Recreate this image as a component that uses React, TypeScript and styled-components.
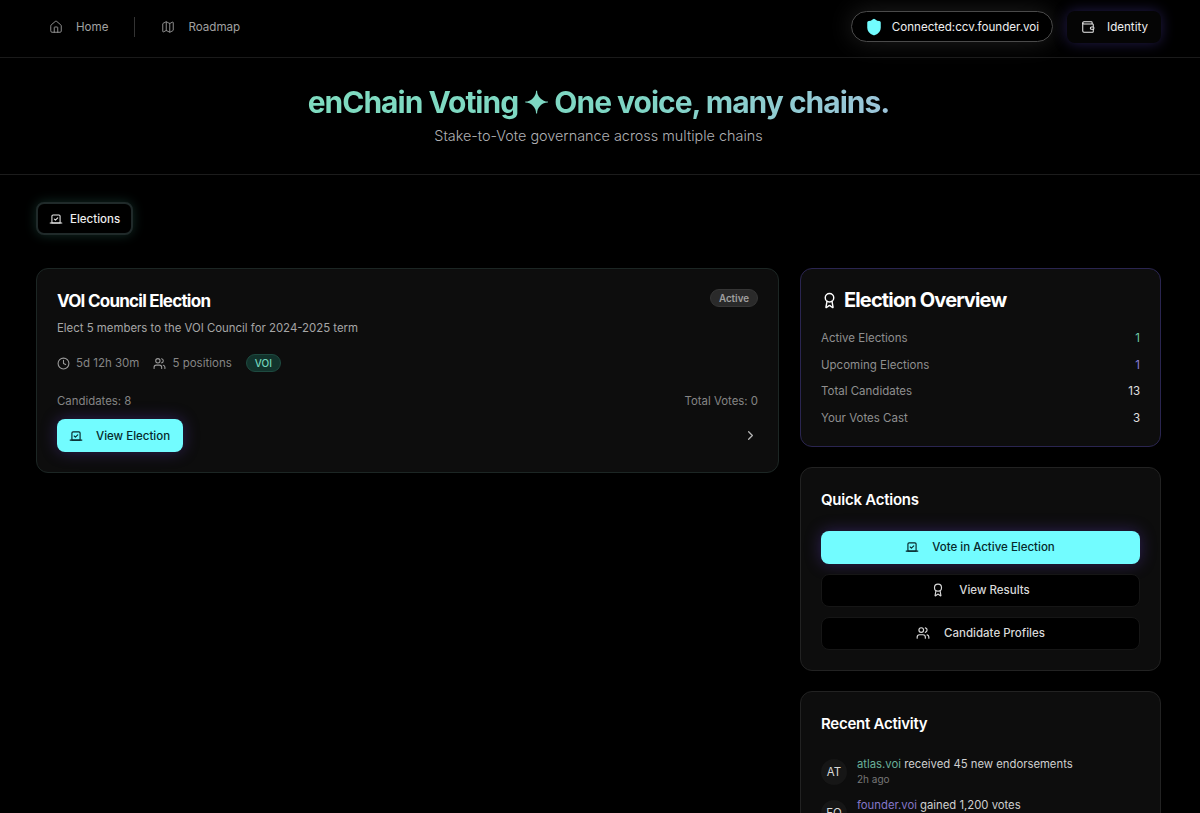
import { Award, ChevronRight, Clock, House, Map, Shield, Users, Vote, Wallet } from "lucide-react";
import styled, { createGlobalStyle } from "styled-components";

const GlobalStyle = createGlobalStyle`
  * { box-sizing: border-box; }
  html, body { margin: 0; background: #000; }
  body { font-family: Inter, "Liberation Sans", sans-serif; color: #fff; -webkit-font-smoothing: antialiased; }
`;

const Page = styled.div`
  min-height: 813px;
  background: #000;
`;

const TopBar = styled.header`
  height: 58px;
  padding: 0 39px 4px 36px;
  display: flex;
  align-items: center;
  justify-content: space-between;
  border-bottom: 1px solid #1a1a1a;
`;

const NavGroup = styled.nav`
  display: flex;
  align-items: center;
`;

const NavLink = styled.a`
  display: flex;
  align-items: center;
  gap: 13px;
  padding: 0 13px;
  font-size: 11.6px;
  font-weight: 400;
  color: #a0a0a0;
  svg { width: 14px; height: 14px; }
`;

const NavDivider = styled.div`
  width: 1px;
  height: 20px;
  margin: 0 13px;
  background: #333;
`;

const Wallets = styled.div`
  display: flex;
  align-items: center;
  gap: 14px;
`;

const ConnectedPill = styled.div`
  height: 31px;
  padding: 0 13px;
  display: flex;
  align-items: center;
  gap: 9px;
  border-radius: 16px;
  background: #000;
  border: 1px solid #4a4a4a;
  box-shadow: 0 0 24px rgba(255, 255, 255, 0.12);
  font-size: 11.6px;
  font-weight: 400;
  color: #eee;
  svg { width: 18px; height: 18px; color: #72fcff; fill: #72fcff; }
`;

const IdentityButton = styled.button`
  height: 32px;
  padding: 0 13px 0 14px;
  display: flex;
  align-items: center;
  gap: 12px;
  border: 0;
  border-radius: 8px;
  background: #050505;
  box-shadow: 0 0 14px rgba(88, 70, 190, 0.4);
  font: 400 11.6px Inter, sans-serif;
  color: #eee;
  svg { width: 14px; height: 14px; }
`;

const Hero = styled.section`
  height: 117px;
  padding: 25px 3px 0 0;
  text-align: center;
  border-bottom: 1px solid #1c1c1c;
`;

const HeroTitle = styled.h1`
  margin: 0 auto;
  width: fit-content;
  font-size: 30px;
  line-height: 38px;
  font-weight: 700;
  letter-spacing: -1px;
  background: linear-gradient(100deg, #7fdcc0 0%, #7ed6c4 55%, #9cc4da 100%);
  -webkit-background-clip: text;
  background-clip: text;
  color: transparent;
`;

const HeroSub = styled.p`
  margin: 5px 0 0;
  font-size: 14.4px;
  line-height: 20px;
  font-weight: 300;
  color: #b0b0b4;
`;

const Content = styled.main`
  padding: 27px 39px 40px 36px;
`;

const TabButton = styled.button`
  height: 33px;
  padding: 0 11px;
  display: flex;
  align-items: center;
  gap: 7px;
  border: 2px solid #202a2a;
  border-radius: 8px;
  background: #000;
  box-shadow: 0 0 12px rgba(90, 220, 190, 0.2);
  font: 500 11.5px Inter, sans-serif;
  color: #eee;
  svg { width: 14px; height: 14px; }
`;

const Columns = styled.div`
  margin-top: 33px;
  display: grid;
  grid-template-columns: 743px 361px;
  gap: 21px;
  align-items: start;
`;

const Card = styled.section<{ $tone?: "teal" | "violet" }>`
  padding: 20px;
  background: #0d0d0d;
  border-radius: 12px;
  border: 1px solid ${(p) => (p.$tone === "teal" ? "#1c2624" : p.$tone === "violet" ? "#2a2550" : "#222")};
`;

const ElectionHead = styled.div`
  display: flex;
  align-items: flex-start;
  justify-content: space-between;
`;

const ElectionTitle = styled.h2`
  margin: 0;
  font-size: 17px;
  line-height: 25px;
  font-weight: 700;
  letter-spacing: -0.75px;
`;

const ElectionDesc = styled.p`
  margin: 6px 0 0;
  font-size: 11.4px;
  line-height: 16px;
  color: #a6a6a6;
`;

const StatusBadge = styled.span`
  height: 18px;
  padding: 0 8px;
  display: flex;
  align-items: center;
  border-radius: 9px;
  background: #2a2a2a;
  border: 1px solid #353535;
  font-size: 9.8px;
  font-weight: 600;
  color: #a0a0a0;
`;

const MetaRow = styled.div`
  margin-top: 18px;
  display: flex;
  align-items: center;
  gap: 14px;
`;

const MetaItem = styled.span`
  display: flex;
  align-items: center;
  gap: 6px;
  font-size: 11.5px;
  color: #858585;
  svg { width: 13px; height: 13px; color: #9a9a9a; }
`;

const ChainBadge = styled.span`
  height: 18px;
  padding: 0 8px;
  display: flex;
  align-items: center;
  border-radius: 9px;
  background: #12332c;
  border: 1px solid #1e4a40;
  font-size: 10px;
  font-weight: 500;
  color: #72d6bc;
`;

const CountRow = styled.div`
  margin-top: 21px;
  display: flex;
  justify-content: space-between;
  font-size: 11.4px;
  line-height: 16px;
  color: #858585;
`;

const ActionRow = styled.div`
  margin-top: 10px;
  display: flex;
  align-items: center;
  justify-content: space-between;
  svg.chevron { width: 15px; height: 15px; color: #b5b5b5; }
`;

const PrimaryButton = styled.button<{ $wide?: boolean }>`
  height: 33px;
  padding: 0 13px 0 12px;
  display: flex;
  align-items: center;
  justify-content: center;
  gap: 13px;
  width: ${(p) => (p.$wide ? "100%" : "auto")};
  border: 0;
  border-radius: 8px;
  background: #72fcff;
  box-shadow: 0 0 16px rgba(110, 70, 220, 0.35);
  font: 500 11.5px Inter, sans-serif;
  color: #06292c;
  svg { width: 14px; height: 14px; }
`;

const SideColumn = styled.aside`
  display: flex;
  flex-direction: column;
  gap: 20px;
`;

const OverviewTitle = styled.h2`
  margin: 0;
  display: flex;
  align-items: center;
  gap: 6px;
  font-size: 20px;
  line-height: 22px;
  font-weight: 700;
  letter-spacing: -0.85px;
  svg { width: 17px; height: 17px; }
`;

const StatList = styled.dl`
  margin: 19px 0 -1px;
  display: flex;
  flex-direction: column;
  gap: 10px;
`;

const StatRow = styled.div`
  display: flex;
  justify-content: space-between;
  font-size: 11.5px;
  line-height: 16.7px;
  dt { color: #8f8f8f; }
`;

const StatValue = styled.dd<{ $color: string }>`
  margin: 0;
  color: ${(p) => p.$color};
`;

const PanelTitle = styled.h3`
  margin: 2px 0 0;
  font-size: 15px;
  line-height: 20px;
  font-weight: 600;
  letter-spacing: -0.25px;
`;

const ActionStack = styled.div`
  margin-top: 21px;
  display: flex;
  flex-direction: column;
  gap: 10px;
`;

const GhostButton = styled.button`
  height: 33px;
  display: flex;
  align-items: center;
  justify-content: center;
  gap: 14px;
  border: 1px solid #161616;
  border-radius: 8px;
  background: #000;
  font: 500 11.5px Inter, sans-serif;
  color: #d8d8d8;
  svg { width: 14px; height: 14px; }
`;

const ActivityList = styled.div`
  margin-top: 23px;
  display: flex;
  flex-direction: column;
  gap: 12px;
`;

const ActivityRow = styled.div`
  display: flex;
  align-items: flex-start;
  gap: 10px;
`;

const Avatar = styled.div`
  width: 26px;
  height: 26px;
  margin-top: 2px;
  flex: none;
  display: flex;
  align-items: center;
  justify-content: center;
  border-radius: 50%;
  background: #161616;
  font-size: 11.5px;
  color: #d8d8d8;
`;

const ActivityText = styled.div`
  font-size: 11.3px;
  line-height: 15px;
  color: #cfcfcf;
`;

const ActivityName = styled.span<{ $color: string }>`
  color: ${(p) => p.$color};
`;

const ActivityTime = styled.div`
  font-size: 10px;
  line-height: 14px;
  color: #777;
`;

const stats = [
  { label: "Active Elections", value: "1", color: "#6fc9a8" },
  { label: "Upcoming Elections", value: "1", color: "#8b7fd6" },
  { label: "Total Candidates", value: "13", color: "#e0e0e0" },
  { label: "Your Votes Cast", value: "3", color: "#e0e0e0" },
];

const activity = [
  { initials: "AT", name: "atlas.voi", color: "#6ab09a", text: " received 45 new endorsements", time: "2h ago" },
  { initials: "FO", name: "founder.voi", color: "#8577c8", text: " gained 1,200 votes", time: "4h ago" },
];

export default function App() {
  return (
    <Page>
      <GlobalStyle />
      <TopBar>
        <NavGroup>
          <NavLink>
            <House strokeWidth={1.5} />
            Home
          </NavLink>
          <NavDivider />
          <NavLink>
            <Map strokeWidth={1.5} />
            Roadmap
          </NavLink>
        </NavGroup>
        <Wallets>
          <ConnectedPill>
            <Shield />
            Connected:ccv.founder.voi
          </ConnectedPill>
          <IdentityButton>
            <Wallet strokeWidth={1.75} />
            Identity
          </IdentityButton>
        </Wallets>
      </TopBar>

      <Hero>
        <HeroTitle>enChain Voting ✦ One voice, many chains.</HeroTitle>
        <HeroSub>Stake-to-Vote governance across multiple chains</HeroSub>
      </Hero>

      <Content>
        <TabButton>
          <Vote strokeWidth={1.75} />
          Elections
        </TabButton>

        <Columns>
          <Card $tone="teal">
            <ElectionHead>
              <ElectionTitle>VOI Council Election</ElectionTitle>
              <StatusBadge>Active</StatusBadge>
            </ElectionHead>
            <ElectionDesc>Elect 5 members to the VOI Council for 2024-2025 term</ElectionDesc>
            <MetaRow>
              <MetaItem>
                <Clock />
                5d 12h 30m
              </MetaItem>
              <MetaItem>
                <Users />
                5 positions
              </MetaItem>
              <ChainBadge>VOI</ChainBadge>
            </MetaRow>
            <CountRow>
              <span>Candidates: 8</span>
              <span>Total Votes: 0</span>
            </CountRow>
            <ActionRow>
              <PrimaryButton>
                <Vote />
                View Election
              </PrimaryButton>
              <ChevronRight className="chevron" />
            </ActionRow>
          </Card>

          <SideColumn>
            <Card $tone="violet">
              <OverviewTitle>
                <Award />
                Election Overview
              </OverviewTitle>
              <StatList>
                {stats.map((s) => (
                  <StatRow key={s.label}>
                    <dt>{s.label}</dt>
                    <StatValue $color={s.color}>{s.value}</StatValue>
                  </StatRow>
                ))}
              </StatList>
            </Card>

            <Card>
              <PanelTitle>Quick Actions</PanelTitle>
              <ActionStack>
                <PrimaryButton $wide>
                  <Vote />
                  Vote in Active Election
                </PrimaryButton>
                <GhostButton>
                  <Award />
                  View Results
                </GhostButton>
                <GhostButton>
                  <Users />
                  Candidate Profiles
                </GhostButton>
              </ActionStack>
            </Card>

            <Card>
              <PanelTitle>Recent Activity</PanelTitle>
              <ActivityList>
                {activity.map((a) => (
                  <ActivityRow key={a.initials}>
                    <Avatar>{a.initials}</Avatar>
                    <ActivityText>
                      <ActivityName $color={a.color}>{a.name}</ActivityName>
                      {a.text}
                      <ActivityTime>{a.time}</ActivityTime>
                    </ActivityText>
                  </ActivityRow>
                ))}
              </ActivityList>
            </Card>
          </SideColumn>
        </Columns>
      </Content>
    </Page>
  );
}
